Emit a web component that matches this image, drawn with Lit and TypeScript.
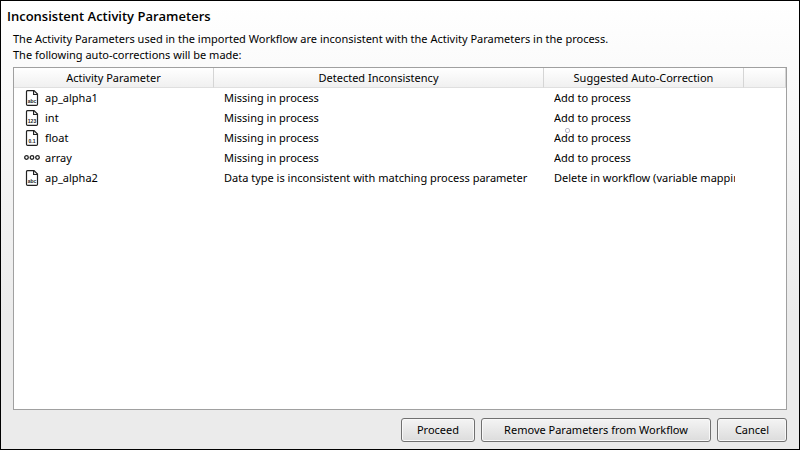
import { LitElement, html, css, svg } from "lit";
import { customElement } from "lit/decorators.js";

type Kind = "abc" | "123" | "0.1" | "array";
interface Row {
  kind: Kind;
  name: string;
  issue: string;
  fix: string;
  marked?: boolean;
}

const ROWS: Row[] = [
  { kind: "abc", name: "ap_alpha1", issue: "Missing in process", fix: "Add to process" },
  { kind: "123", name: "int", issue: "Missing in process", fix: "Add to process" },
  { kind: "0.1", name: "float", issue: "Missing in process", fix: "Add to process", marked: true },
  { kind: "array", name: "array", issue: "Missing in process", fix: "Add to process" },
  {
    kind: "abc",
    name: "ap_alpha2",
    issue: "Data type is inconsistent with matching process parameter",
    fix: "Delete in workflow (variable mapping)",
  },
];

@customElement("type-icon")
class TypeIcon extends LitElement {
  static properties = { kind: { type: String } };
  declare kind: Kind;

  static styles = css`
    :host { display: block; width: 16px; height: 16px; flex: none; }
    svg { display: block; }
    text { font: bold 5px "Liberation Sans", Arial, sans-serif; text-anchor: middle; fill: #222; }
  `;

  render() {
    const body =
      this.kind === "array"
        ? svg`<g fill="none" stroke="#222" stroke-width="1.3">
            <circle cx="2.5" cy="7.5" r="1.8"/><circle cx="8" cy="7.5" r="1.8"/><circle cx="13.5" cy="7.5" r="1.8"/>
          </g>`
        : svg`<path d="M3.5 .6H10L13.5 4.1V14.2Q13.5 15.4 12.3 15.4H3.7Q2.5 15.4 2.5 14.2V1.8Q2.5 .6 3.5 .6Z" fill="#fff" stroke="#222" stroke-width="1.2"/>
          <path d="M9.6 1V4.5H13.2" fill="none" stroke="#222" stroke-width="1.2"/>
          <text x="8" y="12.6">${this.kind}</text>`;
    return html`<svg width="16" height="16" viewBox="0 0 16 16" aria-hidden="true">${body}</svg>`;
  }
}

@customElement("app-root")
class AppRoot extends LitElement {
  static styles = css`
    :host {
      display: flex;
      flex-direction: column;
      box-sizing: border-box;
      min-height: 100vh;
      padding: 7px 12px;
      border: 1px solid #000;
      background: linear-gradient(#fff, #ebebeb 70%);
      color: #000;
      font: 11px/16px "Noto Sans", "Open Sans", sans-serif;
    }
    h1 {
      margin: 0 0 7px -6px;
      font: 600 13px/16px "Open Sans", "Noto Sans", sans-serif;
    }
    p { margin: 0; }
    .list {
      flex: 1;
      margin-top: 4px;
      border: 1px solid #a0a0a0;
      background: #fff;
      overflow: hidden;
    }
    table { width: 100%; table-layout: fixed; border-collapse: separate; border-spacing: 0; }
    .name { width: 200px; }
    .issue { width: 330px; }
    .fix { width: 200px; }
    th {
      box-sizing: border-box;
      height: 20px;
      padding: 0;
      border-right: 1px solid #d5d5d5;
      border-bottom: 1px solid #dfdfdf;
      background: linear-gradient(#fff, #f0f0f0);
      font-weight: 400;
    }
    td {
      position: relative;
      height: 20px;
      padding: 0 0 0 10px;
      white-space: nowrap;
    }
    .clip { margin-right: 9px; overflow: hidden; }
    .item { display: flex; align-items: center; gap: 5px; }
    .marked::after {
      content: "";
      position: absolute;
      left: 21px;
      top: 0;
      width: 3px;
      height: 3px;
      border: 1px solid #bdbccb;
      border-radius: 2px;
    }
    footer { display: flex; justify-content: flex-end; gap: 6px; margin-top: 8px; }
    button {
      box-sizing: border-box;
      min-width: 70px;
      height: 24px;
      padding: 0 14px;
      border: 1px solid #707070;
      border-radius: 3px;
      background: linear-gradient(#f4f4f4, #dcdcdc);
      box-shadow: inset 0 0 0 1px #f8f8f8;
      color: inherit;
      font: inherit;
    }
    .medium { min-width: 74px; }
    .wide { min-width: 230px; }
  `;

  render() {
    return html`
      <h1>Inconsistent Activity Parameters</h1>
      <p>
        The Activity Parameters used in the imported Workflow are inconsistent with the Activity
        Parameters in the process.
      </p>
      <p>The following auto-corrections will be made:</p>
      <div class="list">
        <table>
          <thead>
            <tr>
              <th class="name" scope="col">Activity Parameter</th>
              <th class="issue" scope="col">Detected Inconsistency</th>
              <th class="fix" scope="col">Suggested Auto-Correction</th>
              <th></th>
            </tr>
          </thead>
          <tbody>
            ${ROWS.map(
              (r) => html`<tr>
                <td><div class="item"><type-icon .kind=${r.kind}></type-icon><span>${r.name}</span></div></td>
                <td>${r.issue}</td>
                <td class=${r.marked ? "marked" : ""}><div class="clip">${r.fix}</div></td>
                <td></td>
              </tr>`
            )}
          </tbody>
        </table>
      </div>
      <footer>
        <button type="button" class="medium">Proceed</button>
        <button type="button" class="wide">Remove Parameters from Workflow</button>
        <button type="button">Cancel</button>
      </footer>
    `;
  }
}
